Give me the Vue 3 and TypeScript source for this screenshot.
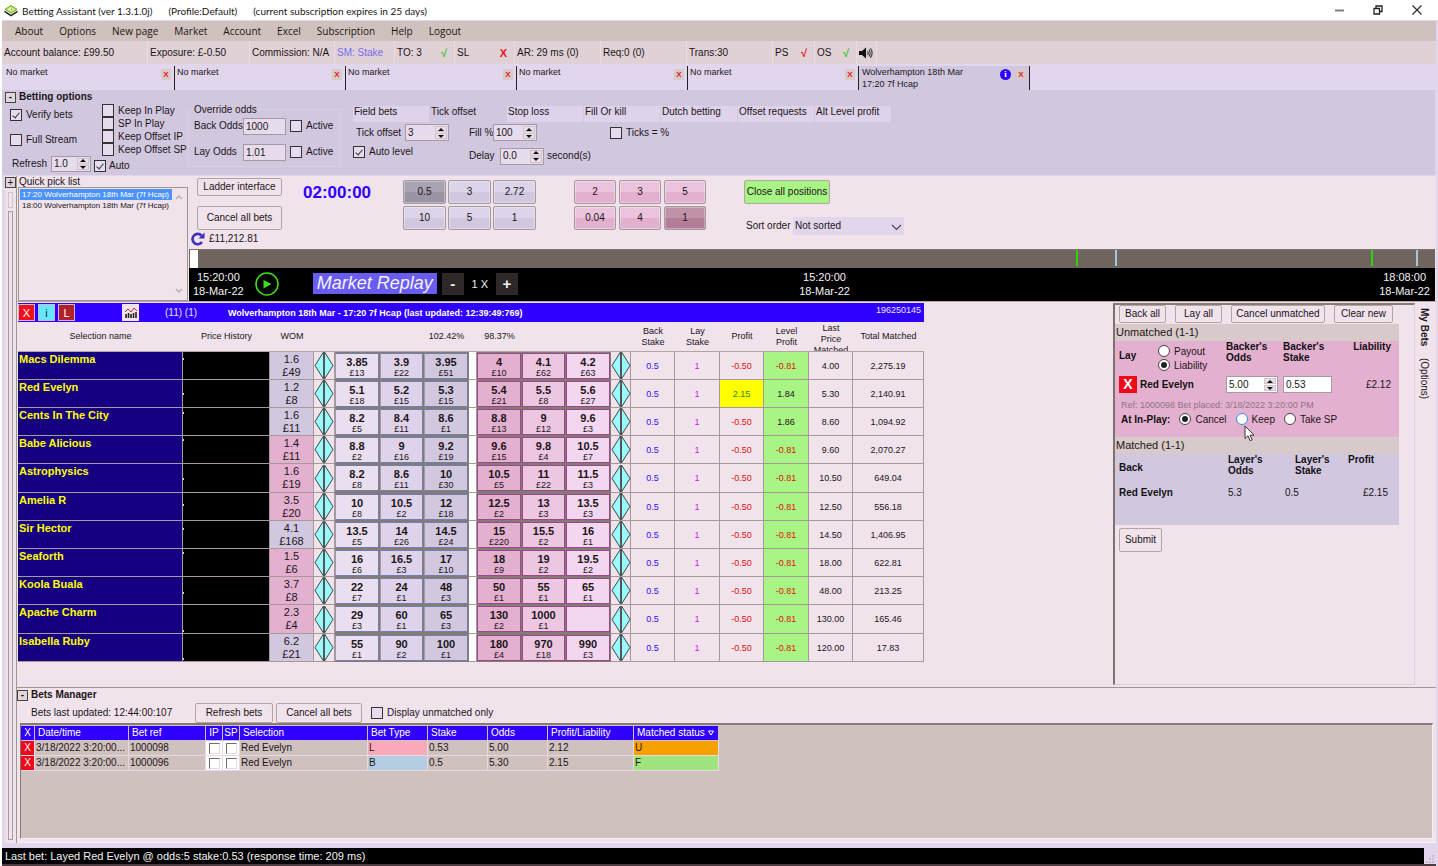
<script setup lang="ts">
import { ref } from 'vue'

interface Runner {
  name: string
  wom: [string, string]
  lay: boolean
  dot: number
  prices: [string, string][]
  profit: string
  level: string
  last: string
  total: string
}

const menu = ['About', 'Options', 'New page', 'Market', 'Account', 'Excel', 'Subscription', 'Help', 'Logout']
const emptyTabs = [1, 2, 3, 4, 5]
const optionTabs = ['Field bets', 'Tick offset', 'Stop loss', 'Fill Or kill', 'Dutch betting', 'Offset requests', 'Alt Level profit']
const keepOptions = ['Keep In Play', 'SP In Play', 'Keep Offset IP', 'Keep Offset SP']
const backStakes = ['0.5', '3', '2.72', '10', '5', '1']
const layStakes = ['2', '3', '5', '0.04', '4', '1']
const markers = [
  { at: 71.2, kind: 'start' },
  { at: 74.3, kind: 'end' },
  { at: 94.9, kind: 'start' },
  { at: 98.5, kind: 'end' },
]
const columns = [165, 87, 44, 21, 45, 44, 45, 8, 45, 44, 45, 20, 44, 45, 44, 45, 44, 71]
const gridColumns = [14, 94, 77, 17, 17, 128, 60, 60, 60, 86, 85]

const p = (s: string): [string, string][] =>
  s.split(' ').map((x) => (x === '-' ? ['', ''] : (x.split('/') as [string, string])))

const runners: Runner[] = [
  { name: 'Macs Dilemma', wom: ['1.6', '£49'], lay: false, dot: 5, prices: p('3.85/£13 3.9/£22 3.95/£51 4/£10 4.1/£62 4.2/£63'), profit: '-0.50', level: '-0.81', last: '4.00', total: '2,275.19' },
  { name: 'Red Evelyn', wom: ['1.2', '£8'], lay: false, dot: 12, prices: p('5.1/£18 5.2/£15 5.3/£15 5.4/£21 5.5/£8 5.6/£27'), profit: '2.15', level: '1.84', last: '5.30', total: '2,140.91' },
  { name: 'Cents In The City', wom: ['1.6', '£11'], lay: false, dot: 3, prices: p('8.2/£5 8.4/£11 8.6/£1 8.8/£13 9/£12 9.6/£3'), profit: '-0.50', level: '1.86', last: '8.60', total: '1,094.92' },
  { name: 'Babe Alicious', wom: ['1.4', '£11'], lay: true, dot: 2, prices: p('8.8/£2 9/£16 9.2/£19 9.6/£15 9.8/£4 10.5/£7'), profit: '-0.50', level: '-0.81', last: '9.60', total: '2,070.27' },
  { name: 'Astrophysics', wom: ['1.6', '£19'], lay: true, dot: 13, prices: p('8.2/£8 8.6/£11 10/£30 10.5/£5 11/£22 11.5/£3'), profit: '-0.50', level: '-0.81', last: '10.50', total: '649.04' },
  { name: 'Amelia R', wom: ['3.5', '£20'], lay: true, dot: 10, prices: p('10/£8 10.5/£2 12/£18 12.5/£2 13/£3 13.5/£3'), profit: '-0.50', level: '-0.81', last: '12.50', total: '556.18' },
  { name: 'Sir Hector', wom: ['4.1', '£168'], lay: false, dot: 6, prices: p('13.5/£5 14/£26 14.5/£24 15/£220 15.5/£2 16/£1'), profit: '-0.50', level: '-0.81', last: '14.50', total: '1,406.95' },
  { name: 'Seaforth', wom: ['1.5', '£6'], lay: true, dot: 2, prices: p('16/£6 16.5/£3 17/£10 18/£9 19/£2 19.5/£2'), profit: '-0.50', level: '-0.81', last: '18.00', total: '622.81' },
  { name: 'Koola Buala', wom: ['3.7', '£8'], lay: true, dot: 14, prices: p('22/£7 24/£1 48/£3 50/£1 55/£1 65/£1'), profit: '-0.50', level: '-0.81', last: '48.00', total: '213.25' },
  { name: 'Apache Charm', wom: ['2.3', '£4'], lay: true, dot: 24, prices: p('29/£3 60/£1 65/£3 130/£2 1000/£1 -'), profit: '-0.50', level: '-0.81', last: '130.00', total: '165.46' },
  { name: 'Isabella Ruby', wom: ['6.2', '£21'], lay: false, dot: 23, prices: p('55/£1 90/£2 100/£1 180/£4 970/£18 990/£3'), profit: '-0.50', level: '-0.81', last: '120.00', total: '17.83' },
]

const bets = [
  { ref: '1000098', type: 'L', stake: '0.53', odds: '5.00', pl: '2.12', status: 'U' },
  { ref: '1000096', type: 'B', stake: '0.5', odds: '5.30', pl: '2.15', status: 'F' },
]

const sizing = ref('liability')
const inPlay = ref('cancel')
</script>

<template>
  <div class="win">
    <header class="title">
      <svg class="logo" width="14" height="12" viewBox="0 0 14 12">
        <path d="M.5 5.500v1.800L7 11.500l6.500-4.200V5.500L7 9.700z" fill="#1c1c1c" />
        <path d="M7 .5l6 3.800-6 3.900-6-3.900z" fill="#b4e05a" stroke="#6fae1c" />
        <path d="M7 2.200l3.400 2.100L7 6.500 3.600 4.300z" fill="#f4fbe4" />
        <path d="M7 3l1.800 1.300L7 5.500z" fill="#6fae1c" />
      </svg>
      <span>Betting Assistant (ver 1.3.1.0j)</span>
      <span>(Profile:Default)</span>
      <span>(current subscription expires in 25 days)</span>
      <div class="win-buttons">
        <button aria-label="Minimize"><svg width="10" height="10"><path d="M1 5.500h9" stroke="#8a7a76" stroke-width="2" /></svg></button>
        <button aria-label="Restore"><svg width="10" height="10"><path d="M1 3.500h5.500v5.500H1zM3 3.500V1h6v5.500H6.500" fill="none" stroke="#222" stroke-width="1.300" /></svg></button>
        <button aria-label="Close"><svg width="10" height="10"><path d="M.5 .5l9 9M9.500 .5l-9 9" stroke="#332a28" stroke-width="1.200" /></svg></button>
      </div>
    </header>

    <nav class="menu"><button v-for="m in menu" :key="m">{{ m }}</button></nav>

    <div class="strip">
      <span class="w-bal">Account balance: £99.50</span>
      <span class="w-exp">Exposure: £-0.50</span>
      <span class="w-com">Commission: N/A</span>
      <span class="w-60 sm">SM: Stake</span>
      <span class="w-60">TO: 3<b class="ok">√</b></span>
      <span class="w-60">SL<b class="no">X</b></span>
      <span class="w-86">AR: 29 ms (0)</span>
      <span class="w-86">Req:0 (0)</span>
      <span class="w-86">Trans:30</span>
      <span class="w-42">PS<b class="bad">√</b></span>
      <span class="w-42">OS<b class="ok">√</b></span>
      <span class="w-snd">
        <svg width="14" height="12" viewBox="0 0 14 12"><path d="M0 4h3l4-3.500v11L3 8H0z" fill="#111" /><path d="M8.500 4q1.200 2 0 4M10 2.500q2.200 3.500 0 7M11.500 1.200q3.200 4.800 0 9.600" fill="none" stroke="#333" stroke-width="1.100" /></svg>
      </span>
    </div>

    <div class="tabs">
      <div v-for="t in emptyTabs" :key="t" class="tab"><span>No market</span><button class="tab-x" aria-label="Close tab">X</button></div>
      <div class="tab on"><span>Wolverhampton 18th Mar<br />17:20 7f Hcap</span><i class="info">i</i><button class="tab-x" aria-label="Close tab">X</button></div>
    </div>

    <section class="options">
      <h2 class="head"><button class="toggle">-</button>Betting options</h2>
      <div class="opt-row">
        <div class="opt-a">
          <div class="opt-checks">
            <div class="col-a">
              <label><input type="checkbox" checked />Verify bets</label>
              <label><input type="checkbox" />Full Stream</label>
            </div>
            <div class="col-b">
              <label v-for="k in keepOptions" :key="k"><input type="checkbox" />{{ k }}</label>
            </div>
          </div>
          <div class="refresh">
            <label for="refresh">Refresh</label>
            <span class="spin w40"><input id="refresh" value="1.0" /><span><button aria-label="Up" /><button aria-label="Down" /></span></span>
            <label><input type="checkbox" checked />Auto</label>
          </div>
        </div>
        <fieldset class="override">
          <legend>Override odds</legend>
          <div><label for="bo">Back Odds</label><input id="bo" class="box" value="1000" /><label><input type="checkbox" />Active</label></div>
          <div><label for="lo">Lay Odds</label><input id="lo" class="box" value="1.01" /><label><input type="checkbox" />Active</label></div>
        </fieldset>
        <div class="opt-c">
          <div class="opt-tabs"><button v-for="t in optionTabs" :key="t" :class="{ cur: t === 'Tick offset' }">{{ t }}</button></div>
          <div class="opt-grid">
            <div class="f1">
              <label for="to">Tick offset</label>
              <span class="spin w44"><input id="to" value="3" /><span><button aria-label="Up" /><button aria-label="Down" /></span></span>
            </div>
            <div class="f2">
              <label for="fp">Fill %</label>
              <span class="spin w44"><input id="fp" value="100" /><span><button aria-label="Up" /><button aria-label="Down" /></span></span>
            </div>
            <label class="f3"><input type="checkbox" />Ticks = %</label>
            <label class="f4"><input type="checkbox" checked />Auto level</label>
            <div class="f5">
              <label for="dl">Delay</label>
              <span class="spin w44"><input id="dl" value="0.0" /><span><button aria-label="Up" /><button aria-label="Down" /></span></span>
              <span>second(s)</span>
            </div>
          </div>
        </div>
      </div>
    </section>

    <div class="body">
      <aside class="gutter"><button class="toggle">+</button><i class="rail short" /><i class="rail" /></aside>
      <main class="main">
        <section class="top">
          <div class="quick">
            <h3>Quick pick list</h3>
            <div class="list">
              <ul>
                <li class="sel">17:20 Wolverhampton 18th Mar (7f Hcap)</li>
                <li>18:00 Wolverhampton 18th Mar (7f Hcap)</li>
              </ul>
              <div class="scroll">
                <svg width="8" height="6"><path d="M1 5l3-3 3 3" fill="none" stroke="#b9aeb6" stroke-width="1.500" /></svg>
                <svg width="8" height="6"><path d="M1 1l3 3 3-3" fill="none" stroke="#b9aeb6" stroke-width="1.500" /></svg>
              </div>
            </div>
          </div>
          <div class="top-right">
            <div class="controls">
              <div class="actions">
                <button class="btn ladder">Ladder interface</button>
                <button class="btn cancel">Cancel all bets</button>
                <div class="funds">
                  <svg width="15" height="14" viewBox="0 0 15 14"><path d="M11.500 3.500A5.200 5.200 0 1 0 12 10" fill="none" stroke="#4030b8" stroke-width="2.600" /><path d="M14.500 .5v6H8.500z" fill="#4030b8" /></svg>
                  £11,212.81
                </div>
              </div>
              <div class="clock">02:00:00</div>
              <div class="stakes back"><button v-for="(s, i) in backStakes" :key="i" :class="{ picked: i === 0 }">{{ s }}</button></div>
              <div class="stakes lay"><button v-for="(s, i) in layStakes" :key="i" :class="{ picked: i === 5 }">{{ s }}</button></div>
              <div class="closing">
                <button class="btn close-all">Close all positions</button>
                <div class="sort">
                  <label for="sort">Sort order</label>
                  <span class="select"><select id="sort"><option>Not sorted</option></select><svg width="11" height="7"><path d="M1 1l4.500 4.500L10 1" fill="none" stroke="#4a4248" stroke-width="1.100" /></svg></span>
                </div>
              </div>
            </div>
            <div class="timeline"><i class="knob" /><i v-for="m in markers" :key="m.at" :class="['mark', m.kind]" :style="{ left: m.at + '%' }" /></div>
            <div class="replay">
              <div class="rp-left">
                <span class="stamp">15:20:00<br />18-Mar-22</span>
                <button class="play" aria-label="Play"><svg width="24" height="24"><circle cx="12" cy="12" r="11" fill="none" stroke="#3fe01c" stroke-width="1.500" /><path d="M8.500 8l8 4-8 4.500z" fill="#3fe01c" /></svg></button>
                <em>Market Replay</em>
                <button class="sq">-</button><span class="speed">1 X</span><button class="sq">+</button>
              </div>
              <span class="stamp">15:20:00<br />18-Mar-22</span>
              <span class="stamp last">18:08:00<br />18-Mar-22</span>
            </div>
          </div>
        </section>

        <section class="middle">
          <div class="market">
            <div class="mk-head">
              <button class="sqb red">X</button><button class="sqb cyan">i</button><button class="sqb dark">L</button>
              <button class="chart" aria-label="Chart"><svg width="14" height="13" viewBox="0 0 14 13"><path d="M2 12V8M4.500 12V7M7 12V8M9.500 12V7M12 12V6" stroke="#222" stroke-width="1.600" /><path d="M1 6l3-3 3 3 3-4 3 3" fill="none" stroke="#c03028" /></svg></button>
              <span class="count">(11) (1)</span>
              <b>Wolverhampton 18th Mar - 17:20 7f Hcap (last updated: 12:39:49:769)</b>
              <span class="mid">196250145</span>
            </div>
            <table class="prices">
              <colgroup><col v-for="(w, i) in columns" :key="i" :style="{ width: w + 'px' }" /></colgroup>
              <thead>
                <tr>
                  <th>Selection name</th><th>Price History</th><th>WOM</th><th /><th /><th /><th>102.42%</th><th />
                  <th>98.37%</th><th /><th /><th /><th>Back Stake</th><th>Lay Stake</th><th>Profit</th><th>Level Profit</th>
                  <th><div class="clip">Last Price Matched</div></th><th>Total Matched</th>
                </tr>
              </thead>
              <tbody>
                <tr v-for="r in runners" :key="r.name">
                  <td class="name">{{ r.name }}</td>
                  <td class="hist"><svg width="4" height="26"><path :d="`M0 ${r.dot}h1v2H0z`" fill="#ddd" /></svg></td>
                  <td :class="['wom', { pink: r.lay }]">{{ r.wom[0] }}<br />{{ r.wom[1] }}</td>
                  <td class="dia"><svg width="20" height="27" viewBox="0 0 20 27"><path d="M9.500 0L1 13.500 9.500 27zM10.500 0L19 13.500 10.500 27z" fill="#99fbff" stroke="#3c4848" /><path d="M10 0v27" stroke="#555" stroke-width="2" /></svg></td>
                  <td v-for="i in 3" :key="i" :class="['px', 'b' + i]"><button><b>{{ r.prices[i - 1][0] }}</b><small>{{ r.prices[i - 1][1] }}</small></button></td>
                  <td class="gap" />
                  <td v-for="i in 3" :key="'l' + i" :class="['px', 'l' + i]"><button><b>{{ r.prices[i + 2][0] }}</b><small>{{ r.prices[i + 2][1] }}</small></button></td>
                  <td class="dia"><svg width="20" height="27" viewBox="0 0 20 27"><path d="M9.500 0L1 13.500 9.500 27zM10.500 0L19 13.500 10.500 27z" fill="#99fbff" stroke="#3c4848" /><path d="M10 0v27" stroke="#555" stroke-width="2" /></svg></td>
                  <td class="c-blue">0.5</td>
                  <td class="c-mag">1</td>
                  <td :class="r.profit[0] === '-' ? 'c-red' : 'win-cell'">{{ r.profit }}</td>
                  <td :class="['level', { 'c-red': r.level[0] === '-' }]">{{ r.level }}</td>
                  <td>{{ r.last }}</td>
                  <td>{{ r.total }}</td>
                </tr>
              </tbody>
            </table>
          </div>

          <aside class="mybets">
            <div class="mb-panel">
              <div class="mb-btns">
                <button class="btn b1">Back all</button><button class="btn b1">Lay all</button>
                <button class="btn b2">Cancel unmatched</button><button class="btn b3">Clear new</button>
              </div>
              <h4>Unmatched (1-1)</h4>
              <div class="un">
                <div class="g4">
                  <div class="lay-type">
                    <b>Lay</b>
                    <div><label><input v-model="sizing" type="radio" name="sizing" value="payout" />Payout</label><label><input v-model="sizing" type="radio" name="sizing" value="liability" />Liability</label></div>
                  </div>
                  <b>Backer's<br />Odds</b><b>Backer's<br />Stake</b><b class="rt">Liability</b>
                </div>
                <div class="g4 line">
                  <div class="sel-name"><button class="bigx">X</button><b>Red Evelyn</b></div>
                  <span class="spin white"><input aria-label="Odds" value="5.00" /><span><button aria-label="Up" /><button aria-label="Down" /></span></span>
                  <input class="box white" aria-label="Stake" value="0.53" />
                  <span class="rt">£2.12</span>
                </div>
                <p>Ref: 1000098 Bet placed: 3/18/2022 3:20:00 PM</p>
                <div class="inplay">
                  <b>At In-Play:</b>
                  <label><input v-model="inPlay" type="radio" name="ip" value="cancel" />Cancel</label>
                  <label class="hot"><input v-model="inPlay" type="radio" name="ip" value="keep" />Keep
                    <svg class="cursor" width="11" height="17" viewBox="0 0 11 17"><path d="M1 1v12.500l3-2.700 2.200 5 2-1-2.100-4.600h3.900z" fill="#fff" stroke="#333" /></svg>
                  </label>
                  <label><input v-model="inPlay" type="radio" name="ip" value="sp" />Take SP</label>
                </div>
              </div>
              <h4>Matched (1-1)</h4>
              <div class="ma">
                <b class="mid-v">Back</b><b>Layer's<br />Odds</b><b class="push">Layer's<br />Stake</b><b>Profit</b>
                <b>Red Evelyn</b><span>5.3</span><span>0.5</span><span class="rt">£2.15</span>
              </div>
              <button class="btn submit">Submit</button>
            </div>
            <div class="vtabs"><b>My Bets</b><span>(Options)</span></div>
          </aside>
        </section>

        <section class="manager">
          <h2 class="head"><button class="toggle">-</button>Bets Manager</h2>
          <div class="mg-bar">
            <span>Bets last updated: 12:44:00:107</span>
            <button class="btn r1">Refresh bets</button><button class="btn r2">Cancel all bets</button>
            <label><input type="checkbox" />Display unmatched only</label>
          </div>
          <div class="grid">
            <table class="bets">
              <colgroup><col v-for="(w, i) in gridColumns" :key="i" :style="{ width: w + 'px' }" /></colgroup>
              <thead>
                <tr>
                  <th class="c">X</th><th>Date/time</th><th>Bet ref</th><th class="c">IP</th><th class="c">SP</th><th>Selection</th><th>Bet Type</th><th>Stake</th><th>Odds</th><th>Profit/Liability</th>
                  <th><span class="sorted">Matched status<svg width="6" height="6"><path d="M.5 1h5L3 5z" fill="none" stroke="#fff" /></svg></span></th>
                </tr>
              </thead>
              <tbody>
                <tr v-for="b in bets" :key="b.ref">
                  <td class="xc">X</td><td class="pre">3/18/2022  3:20:00...</td><td>{{ b.ref }}</td>
                  <td class="ck"><input type="checkbox" aria-label="In play" /></td><td class="ck"><input type="checkbox" aria-label="Starting price" /></td>
                  <td>Red Evelyn</td><td :class="'t' + b.type">{{ b.type }}</td><td>{{ b.stake }}</td><td>{{ b.odds }}</td><td>{{ b.pl }}</td><td :class="'s' + b.status">{{ b.status }}</td>
                </tr>
              </tbody>
            </table>
          </div>
        </section>
      </main>
    </div>

    <footer class="foot">
      <div>Last bet: Layed Red Evelyn @ odds:5 stake:0.53 (response time: 209 ms)</div>
      <svg width="10" height="10"><path d="M7 1h2v2H7zM4 4h2v2H4zM7 4h2v2H7zM1 7h2v2H1zM4 7h2v2H4zM7 7h2v2H7z" fill="#c9bcc4" /></svg>
    </footer>
  </div>
</template>

<style>
body { margin: 0; background: #e2d6ec; }
</style>

<style scoped>
* { box-sizing: border-box; }
.win {
  min-height: 100vh; display: flex; flex-direction: column;
  border-left: 2px solid #fff; border-right: 2px solid #e2d6ec;
  background: #e2d6ec; color: #1c1518;
  font: 10px/12px "Liberation Sans", Arial, sans-serif;
}
button, input, select { font: inherit; color: inherit; margin: 0; padding: 0; }
button { border: 0; background: none; white-space: nowrap; }
label { display: inline-flex; align-items: center; gap: 4px; white-space: nowrap; }
h2, h3, h4, p, ul { margin: 0; padding: 0; font-size: inherit; }

.title { display: flex; align-items: center; height: 20px; padding: 2px 8px 0 1px; margin: 0 -2px; background: #fff; font-family: Lato, "Open Sans", sans-serif; }
.title > span { margin-right: 16px; white-space: nowrap; }
.logo { flex: none; margin: 0 4px 0 3px; }
.win-buttons { margin-left: auto; display: flex; gap: 29px; padding: 0 8px 2px 0; }
.win-buttons button { display: flex; width: 10px; height: 10px; }
.menu { display: flex; gap: 16px; height: 21px; padding: 0 13px 1px; background: #cfc1bd; border-top: 1px solid #e2d6ec; font-family: "Open Sans", "Noto Sans", sans-serif; }
.strip { display: flex; height: 23px; background: #dfd1d5; }
.strip > span { display: flex; align-items: center; padding-left: 2px; border-right: 1px solid #e8dde4; white-space: nowrap; }
.strip b { margin-left: auto; padding-right: 7px; font-size: 11px; }
.ok { color: #3ec82c; } .no, .bad { color: #f01018; }
.w-bal { width: 146px; } .w-exp { width: 102px; } .w-com { width: 85px; } .w-60 { width: 60px; }
.w-86 { width: 86px; } .w-42 { width: 42px; } .w-snd { width: 20px; }
.sm { color: #7a6cf0; }
.tabs { display: flex; height: 26px; padding: 2px 0 0 2px; }
.tab { display: flex; align-items: flex-start; gap: 5px; width: 171px; padding: 0 3px 0 2px; border-right: 1px solid #222; font-size: 9px; white-space: nowrap; }
.tab > span { margin-right: auto; }
.tab.on { background: #d1c8e0; padding-left: 3px; }
.tab-x { width: 10px; height: 11px; margin-top: 3px; background: #d8caca; color: #e81820; font: bold 8px/11px "Liberation Sans", sans-serif; }
.info { width: 11px; height: 11px; margin-top: 3px; border-radius: 50%; background: #2f00ff; color: #fff; font: bold 9px/11px "Liberation Serif", serif; text-align: center; }

input[type="checkbox"] { appearance: none; flex: none; width: 12px; height: 12px; border: 1px solid #333; background: #e6dcee; display: grid; place-items: center; }
input[type="checkbox"]:checked::after { content: ""; width: 3px; height: 6px; margin-top: -2px; border: solid #333; border-width: 0 1px 1px 0; transform: rotate(40deg); }
input[type="radio"] { appearance: none; flex: none; width: 12px; height: 12px; border: 1px solid #444; border-radius: 50%; background: #fff; display: grid; place-items: center; }
input[type="radio"]:checked::after { content: ""; width: 6px; height: 6px; border-radius: 50%; background: #222; }
.hot input[type="radio"] { border-color: #3b8be8; }
.toggle { width: 11px; height: 11px; border: 1px solid #444; background: #e0d6dc; line-height: 8px; text-align: center; }
.head { display: flex; align-items: center; gap: 3px; height: 14px; }
.box, .spin { width: 43px; height: 17px; border: 1px solid #a59aa2; background: #e6dcee; }
.box { padding-left: 2px; }
.spin { display: inline-flex; padding: 1px; }
.spin > input { flex: 1; min-width: 0; width: 0; border: 0; background: none; padding-left: 1px; }
.spin > span { display: flex; flex-direction: column; gap: 1px; width: 12px; }
.spin button { flex: 1; display: grid; place-items: center; background: #eadfe6; box-shadow: inset 0 0 0 1px #cfc3c8; }
.spin button::before { content: ""; border: 3px solid transparent; border-top: 0; border-bottom: 3px solid #111; }
.spin button:last-child::before { border-top: 3px solid #111; border-bottom: 0; }
.w40 { width: 40px; } .w44 { width: 44px; }
.white { background: #fff; }
.btn { height: 18px; border: 1px solid #b3a6a2; border-radius: 2px; background: #f0e3ec; text-align: center; }

.options { height: 85px; margin-right: 1px; padding: 0 0 0 3px; background: #d1c8e0; }
.opt-row { display: flex; }
.opt-a { width: 183px; }
.opt-checks { display: flex; }
.col-a { display: flex; flex-direction: column; gap: 13px; width: 92px; padding: 5px 0 0 5px; }
.col-b { display: flex; flex-direction: column; padding-left: 5px; }
.col-b label { height: 13px; }
.col-b input { height: 13px; }
.refresh { display: flex; align-items: center; padding-left: 7px; height: 16px; gap: 3px; }
.refresh > :first-child { width: 36px; }
.refresh .spin { height: 16px; }
.refresh > :last-child { padding-top: 4px; gap: 3px; }
.override { width: 153px; height: 63px; margin: 0; padding: 0 6px; border: 0; min-width: 0; box-shadow: inset 0 0 0 1px #d9cfdc; }
.override legend { padding: 0; height: 9px; line-height: 12px; }
.override > div { display: flex; align-items: center; height: 26px; }
.override > div > :first-child { width: 49px; }
.override .box { margin-right: 4px; }
.opt-c { margin-left: 12px; padding-top: 2px; }
.opt-tabs { display: flex; height: 16px; }
.opt-tabs button { width: 77px; text-align: left; padding: 0 1px 5px; border-right: 1px solid #d1c8e0; background: #ded3ea; }
.opt-tabs .cur { background: none; }
.opt-grid { display: grid; grid-template-columns: 116px 141px auto; grid-template-rows: 21px 26px; align-items: center; justify-content: start; }
.f1, .f2, .f5 { display: flex; align-items: center; }
.f1 { padding-left: 3px; } .f1 label { width: 49px; }
.f2 label { width: 24px; gap: 0; } .f5 label { width: 31px; }
.f5 { grid-column: 2 / 4; } .f5 > span:last-child { margin-left: 3px; }
.f4 { grid-column: 1; align-self: start; margin-top: 3px; }

.body { flex: 1; display: flex; margin-top: 1px; }
.gutter { width: 14px; padding: 1px 0 3px 3px; background: linear-gradient(90deg, #e2d6ec 3px, #f0e3ec 4px); display: flex; flex-direction: column; }
.rail { width: 5px; margin: 0 3px 0; flex: 1; border: 1px solid #a59a9c; }
.rail.short { flex: 0 0 16px; margin: 4px 3px 3px; border-color: #cfc4cc; }
.main { flex: 1; min-width: 0; display: flex; flex-direction: column; border-left: 1px solid #a09590; background: #f0e3ec; }
.top { display: flex; border-bottom: 1px solid #b3a8a4; }
.quick { width: 171px; display: flex; flex-direction: column; }
.quick h3 { height: 11px; padding-left: 2px; font-weight: 400; line-height: 11px; }
.list { flex: 1; display: flex; margin-left: 1px; padding: 1px; border: 1px solid #a09590; font-size: 8px; line-height: 11px; }
.list ul { flex: 1; list-style: none; white-space: nowrap; }
.list li { padding-left: 2px; }
.sel { background: #4b93fb; color: #fff; }
.scroll { width: 14px; display: flex; flex-direction: column; justify-content: space-between; align-items: center; padding: 5px 0; }
.top-right { flex: 1; min-width: 0; }
.controls { display: flex; height: 73px; padding-left: 9px; }
.actions { width: 85px; padding-top: 2px; display: flex; flex-direction: column; }
.cancel { height: 24px; margin-top: 10px; }
.funds { display: flex; align-items: center; gap: 4px; margin: 2px 0 0 -7px; white-space: nowrap; }
.clock { width: 121px; padding: 7px 0 0 21px; color: #2f00ff; font: bold 17px/20px "Liberation Sans", sans-serif; }
.stakes { display: grid; grid-template-columns: repeat(3, 43px); grid-template-rows: 24px 24px; gap: 2px; padding-top: 4px; }
.stakes.lay { margin-left: 38px; grid-template-columns: repeat(3, 42px); column-gap: 3px; }
.stakes button { border: 1px solid #a59a9c; border-radius: 2px; box-shadow: inset 0 0 0 1px #ffffff50; }
.back button { background: linear-gradient(#ded4e9 50%, #d1c8e0 50%); }
.lay button { background: linear-gradient(#ecc3dc 50%, #e4b0cf 50%); }
.back .picked { background: linear-gradient(#a9a2b2 50%, #9b94a4 50%); }
.lay .picked { background: linear-gradient(#c092a8 50%, #b37d97 50%); }
.closing { padding: 4px 0 0 38px; }
.close-all { width: 86px; height: 24px; background: #a8f484; }
.sort { display: flex; align-items: center; margin-top: 13px; }
.sort label { width: 49px; padding-left: 2px; }
.select { position: relative; display: flex; }
.select select { appearance: none; width: 111px; height: 18px; padding-left: 2px; border: 0; border-radius: 0; background: #e2d6ec; }
.select svg { position: absolute; right: 2px; top: 7px; pointer-events: none; }
.timeline { position: relative; height: 19px; margin: 0 1px; border-top: 1px solid #7d746f; background: #6e655f; }
.timeline i { position: absolute; top: 0; height: 16px; width: 2px; }
.timeline .knob { left: 1px; width: 8px; height: 18px; background: #fff; }
.start { background: #34d008; } .end { background: #a9c4dc; }
.replay { display: flex; align-items: center; height: 33px; margin: 0 1px; padding: 0 5px 2px 4px; background: #000; color: #f2f2f2; font-size: 11px; }
.rp-left { display: flex; align-items: center; flex: 0 0 49%; }
.stamp { line-height: 14px; text-align: center; white-space: nowrap; }
.stamp.last { margin-left: auto; }
.play { display: flex; margin: 0 34px 0 11px; }
.replay em { padding: 0 4px; margin-right: 5px; background: #6a5cf0; font-size: 18px; line-height: 21px; white-space: nowrap; }
.sq { width: 22px; height: 22px; background: #2e2926; font: bold 15px/20px "Liberation Sans", sans-serif; }
.speed { width: 32px; text-align: center; }

.middle { display: flex; justify-content: space-between; padding: 1px 0 2px 1px; border-bottom: 1px solid #a09590; }
.market { padding-bottom: 23px; }
.mk-head { display: flex; align-items: center; height: 19px; background: #2f00ff; color: #e8e4ff; font-size: 9px; }
.sqb { width: 17px; height: 17px; margin: 0 3px 0 0; border: 1px solid #c8b8e0; font-size: 11px; color: #fff; }
.red { background: #f01018; } .cyan { background: #66e8f8; color: #123; } .dark { background: #b02028; }
.chart { display: grid; place-items: center; width: 17px; height: 17px; margin-left: 44px; background: #f0e3ec; }
.count { width: 89px; padding-left: 26px; font-size: 10px; white-space: nowrap; }
.mk-head b { color: #fff; white-space: nowrap; }
.mid { margin-left: auto; padding: 0 3px 6px 0; }
.prices { width: 906px; table-layout: fixed; border-spacing: 0; font-size: 9px; text-align: center; }
.prices th { height: 30px; padding: 0 6px; border-bottom: 1px solid #b3a6a2; font-weight: 400; line-height: 11px; white-space: nowrap; }
.prices th:nth-child(n+13) { white-space: normal; }
.prices th:nth-child(n+14), .prices th:nth-child(7), .prices th:nth-child(9) { padding: 0; }
.prices th:nth-child(13), .prices th:nth-child(14), .prices th:nth-child(16) { padding: 0 8px; }
.clip { height: 28px; overflow: hidden; padding: 0 4px; }
.prices tbody tr { height: 28px; }
.prices tbody tr:nth-child(5n) { height: 29px; }
.prices td { padding: 0; border: solid #a59a98; border-width: 0 1px 1px 0; }
.prices .name { padding-left: 1px; background: #150082; color: #ffff00; font: bold 11px/14px "Liberation Sans", sans-serif; text-align: left; vertical-align: top; }
.prices .hist { background: #000; text-align: left; }
.hist svg, .dia svg { display: block; }
.prices .wom { background: #d1c8e0; font-size: 11px; line-height: 13px; }
.prices .pink { background: #e4b0cf; }
.prices .gap { background: #fff; }
.prices .px { height: 28px; border-color: #857b76; background: #857b76; }
.px button { display: flex; flex-direction: column; width: 100%; height: 26px; align-items: center; justify-content: flex-end; border: 1px solid #7480ac; border-left-color: #a39aa8; }
.px b { font-size: 11px; line-height: 12px; } .px small { font-size: 9px; line-height: 10px; }
.b1 button { background: #eadff0; } .b2 button { background: #ded3ea; } .b3 button { background: #d1c8e0; }
.l1 button, .l2 button, .l3 button { border-color: #9a4a86; }
.l1 button { background: #e4b0cf; } .l2 button { background: #edc6e2; } .l3 button { background: #f3d6ef; }
.c-blue { color: #2f10f0; } .c-mag { color: #d020e0; } .prices .c-red { color: #e01010; }
.win-cell { background: #ffff00; color: #2f8a10; }
.level { background: #a8f484; }

.mybets { display: flex; width: 323px; }
.mb-panel { width: 302px; border: 1px solid #ddd0dc; border-left: 2px solid #7d726e; border-top: 2px solid #857b76; }
.mb-btns { display: flex; gap: 9px; padding: 0 0 1px 4px; height: 19px; }
.mb-btns .b1 { width: 47px; } .b2.btn { width: 94px; } .b3.btn { width: 59px; }
.mb-panel h4 { height: 17px; margin-right: 15px; padding-left: 1px; background: #d8caca; font-weight: 400; font-size: 11px; line-height: 17px; }
.un { height: 96px; margin-right: 15px; padding-left: 4px; background: #e4b0cf; line-height: 11px; }
.g4 { display: grid; grid-template-columns: 107px 57px 50px 1fr; }
.un .g4:first-child { height: 35px; }
.un b { color: #111; }
.rt { text-align: right; padding-right: 8px; }
.lay-type { display: flex; }
.lay-type > b { width: 39px; padding-top: 9px; }
.lay-type > div { display: flex; flex-direction: column; padding-top: 3px; }
.lay-type label { height: 14px; }
.line { align-items: center; }
.sel-name { display: flex; align-items: center; gap: 3px; }
.bigx { width: 18px; height: 17px; background: #f00818; color: #fff; font: bold 14px/17px "Liberation Sans", sans-serif; }
.g4 .spin { width: 52px; } .g4 .box { width: 49px; }
.un p { padding: 6px 0 2px 2px; color: #8d7585; font-size: 9px; line-height: 12px; }
.inplay { display: flex; gap: 9px; align-items: center; padding-left: 2px; }
.hot { position: relative; }
.cursor { position: absolute; left: 8px; top: 12px; }
.ma { display: grid; grid-template-columns: 109px 57px 63px 40px; grid-template-rows: 33px 12px; height: 71px; margin-right: 15px; padding-left: 4px; background: #d1c8e0; line-height: 11px; }
.mid-v { padding-top: 8px; } .push { padding-left: 10px; } .ma b { color: #111; }
.ma .rt { padding: 0; }
.submit { width: 43px; height: 24px; margin: 3px 0 0 4px; }
.vtabs { writing-mode: vertical-rl; display: flex; gap: 12px; padding: 5px 0 0 3px; }

.manager { flex: 1; display: flex; flex-direction: column; padding: 0 3px 3px 0; border-bottom: 1px solid #f7eef4; }
.mg-bar { display: flex; align-items: center; height: 21px; padding-left: 14px; }
.mg-bar > span { width: 164px; }
.r1 { width: 78px; height: 20px; margin-right: 3px; } .r2 { width: 86px; height: 20px; margin-right: 9px; }
.grid { flex: 1; margin-left: 3px; border: 1px solid #f7eef4; border-top: 2px solid #857b76; border-left: 1px solid #857b76; background: #cfc1bd; padding-top: 1px; }
.bets { width: 698px; table-layout: fixed; border-spacing: 0; text-align: left; white-space: nowrap; }
.bets th { height: 15px; padding: 0 3px; border: solid #cfc1bd; border-width: 0 1px 1px 0; background: #2f00ff; color: #fff; font-weight: 400; line-height: 12px; overflow: hidden; }
.bets td { height: 15px; padding: 0 1px; border: solid #e6d9e4; border-width: 0 1px 1px 0; line-height: 12px; overflow: hidden; }
.bets .c, .bets .xc { text-align: center; padding: 0; }
.bets .xc { background: #f00818; color: #fff; }
.bets .ck { background: #fff; }
.bets .ck input { margin-left: 2px; width: 11px; height: 11px; background: #fff; border-color: #756b68 #e6d9e4 #e6d9e4 #756b68; }
.pre { white-space: pre; }
.tL { background: #f8aab8; } .tB { background: #b5cde2; } .sU { background: #f8a000; } .sF { background: #a0e480; }
.sorted { display: flex; align-items: center; justify-content: space-between; padding-right: 1px; }

.foot { display: flex; height: 23px; padding-top: 5px; border-bottom: 2px solid #4a3c40; }
.foot div { flex: 1; padding-left: 3px; background: #000; color: #f2f2f2; font-size: 11px; line-height: 16px; }
.foot svg { margin: 6px 1px 0; }
</style>
